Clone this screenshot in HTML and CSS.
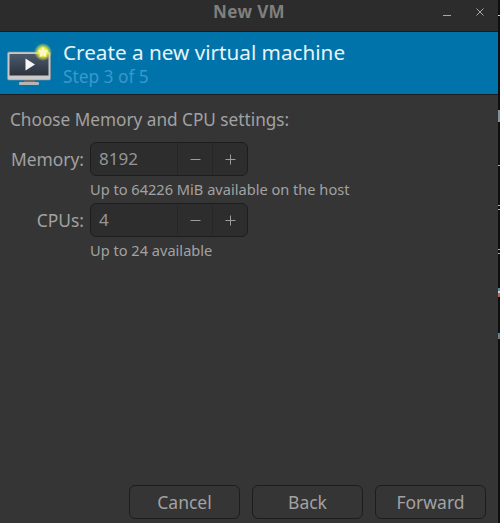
FILE: index.html
```html
<!DOCTYPE html>
<html lang="en">

<head>
    <meta charset="UTF-8">
    <meta name="viewport" content="width=device-width, initial-scale=1.0">
    <title>New VM</title>
    <link rel="stylesheet" href="styles.css">
</head>

<body>
    <div class="window">
        <!-- Title bar -->
        <div class="titlebar">
            <span class="title">New VM</span>
            <div class="window-controls">
                <svg width="10" height="10" viewBox="0 0 10 10">
                    <path d="M1 8.500h8" stroke="#a8a8a8" stroke-width="1" fill="none" />
                </svg>
                <svg width="10" height="10" viewBox="0 0 10 10">
                    <path d="M1.500 1.500l7 7M8.500 1.500l-7 7" stroke="#a8a8a8" stroke-width="1" fill="none" />
                </svg>
            </div>
        </div>

        <!-- Banner -->
        <div class="banner">
            <svg class="banner-icon" width="46" height="42" viewBox="0 0 46 42">
                <defs>
                    <radialGradient id="glow">
                        <stop offset="0.45" stop-color="#f4f43a" />
                        <stop offset="1" stop-color="#f4f43a" stop-opacity="0" />
                    </radialGradient>
                    <linearGradient id="screen" x1="0" y1="0" x2="0" y2="1">
                        <stop offset="0" stop-color="#4d5a6b" />
                        <stop offset="1" stop-color="#2b323d" />
                    </linearGradient>
                </defs>
                <rect x="0.500" y="9" width="43" height="28" rx="1.500" fill="#c9c9c9" stroke="#8d9298" stroke-width="0.6" />
                <rect x="2.500" y="11" width="39" height="21.500" fill="url(#screen)" />
                <rect x="17" y="37" width="11" height="2" fill="#6f6f6f" />
                <rect x="12" y="39" width="20" height="3" rx="1" fill="#b5b5b5" />
                <path d="M18.500 15.500l9.500 6-9.500 6z" fill="#f6f6f6" />
                <circle cx="36" cy="9" r="9" fill="url(#glow)" />
                <path d="M36 3.500l1.700 3.600 3.900.5-2.900 2.700.8 3.900-3.500-2-3.500 2 .8-3.900-2.900-2.700 3.900-.5z" fill="#fbf6c8" />
            </svg>
            <div class="banner-text">
                <div class="banner-title">Create a new virtual machine</div>
                <div class="banner-step">Step 3 of 5</div>
            </div>
        </div>

        <!-- Form -->
        <div class="content">
            <div class="heading">Choose Memory and CPU settings:</div>
            <div class="form-grid">
                <label class="field-label">Memory:</label>
                <div class="spin">
                    <span class="spin-value">8192</span>
                    <span class="spin-btn">
                        <svg width="11" height="11" viewBox="0 0 11 11"><path d="M0.500 5.500h10" stroke="#9c9c9c" fill="none" /></svg>
                    </span>
                    <span class="spin-btn">
                        <svg width="11" height="11" viewBox="0 0 11 11"><path d="M0.500 5.500h10M5.500 0.500v10" stroke="#9c9c9c" fill="none" /></svg>
                    </span>
                </div>
                <div class="hint">Up to 64226 MiB available on the host</div>

                <label class="field-label">CPUs:</label>
                <div class="spin">
                    <span class="spin-value">4</span>
                    <span class="spin-btn">
                        <svg width="11" height="11" viewBox="0 0 11 11"><path d="M0.500 5.500h10" stroke="#9c9c9c" fill="none" /></svg>
                    </span>
                    <span class="spin-btn">
                        <svg width="11" height="11" viewBox="0 0 11 11"><path d="M0.500 5.500h10M5.500 0.500v10" stroke="#9c9c9c" fill="none" /></svg>
                    </span>
                </div>
                <div class="hint">Up to 24 available</div>
            </div>
        </div>

        <!-- Footer buttons -->
        <div class="footer">
            <button class="btn">Cancel</button>
            <button class="btn">Back</button>
            <button class="btn">Forward</button>
        </div>
    </div>
</body>

</html>
```

FILE: styles.css
```css
html,
body {
    height: 100%;
}

/* The desktop peeks out past the right edge of the window */
body {
    margin: 0;
    background-color: #0f0f0f;
    background-image: linear-gradient(to bottom,
            transparent 15px, #d8d8d8 15px, #d8d8d8 16px, transparent 16px,
            transparent 110px, #7f929c 110px, #7f929c 122px, transparent 122px,
            transparent 165px, #b0b0b0 165px, #b0b0b0 166px, transparent 166px,
            transparent 205px, #b0b0b0 205px, #b0b0b0 206px, transparent 206px,
            transparent 209px, #b0b0b0 209px, #b0b0b0 210px, transparent 210px,
            transparent 249px, #b0b0b0 249px, #b0b0b0 250px, transparent 250px,
            transparent 253px, #b0b0b0 253px, #b0b0b0 254px, transparent 254px,
            transparent 288px, #55859c 288px, #55859c 291px, #d0d0d0 291px, #d0d0d0 293px,
            #b0664c 293px, #b0664c 297px, transparent 297px,
            transparent 333px, #55859c 333px, #55859c 337px, #b0664c 337px, #b0664c 339px, transparent 339px);
    color: #a2a2a2;
    font-family: 'Noto Sans', sans-serif;
    overflow: hidden;
}

.window {
    width: 498px;
    height: 100%;
    display: flex;
    flex-direction: column;
    background-color: #353535;
}

/* Title bar */
.titlebar {
    height: 31px;
    flex: none;
    display: flex;
    align-items: center;
    justify-content: center;
    position: relative;
    background-color: #2c2c2c;
    border-bottom: 1px solid #1b1b1b;
}

.title {
    font-size: 17px;
    font-weight: 700;
    color: #7f7f7f;
    letter-spacing: 0.4px;
    margin-top: -9px;
}

.window-controls {
    position: absolute;
    top: 7px;
    right: 13px;
    display: flex;
    gap: 23px;
}

/* Banner */
.banner {
    height: 62px;
    flex: none;
    display: flex;
    align-items: center;
    gap: 10px;
    padding-left: 7px;
    background-color: #0074aa;
    border-bottom: 1px solid #1b1b1b;
}

.banner-icon {
    flex: none;
    margin-top: 1px;
}

.banner-title {
    font-size: 20.700px;
    line-height: 27px;
    color: #e9f3f8;
}

.banner-step {
    font-size: 17.300px;
    line-height: 22px;
    color: #3d98c9;
}

/* Form */
.content {
    flex: 1;
    padding: 14px 10px 0;
}

.heading {
    font-size: 17.200px;
    line-height: 22px;
}

.form-grid {
    display: grid;
    grid-template-columns: 74px auto;
    justify-content: start;
    column-gap: 6px;
    margin-top: 11px;
}

.field-label {
    font-size: 17.400px;
    line-height: 35px;
    height: 34px;
    text-align: right;
}

.spin {
    width: 156px;
    height: 32px;
    display: flex;
    background-color: #2d2d2d;
    border: 1px solid #1d1d1d;
    border-radius: 6px;
}

.spin-value {
    flex: 1;
    padding-left: 8px;
    font-size: 17px;
    line-height: 32px;
    color: #969696;
}

.spin-btn {
    width: 34px;
    display: flex;
    align-items: center;
    justify-content: center;
    border-left: 1px solid #262626;
}

.hint {
    grid-column: 2;
    font-size: 14.600px;
    line-height: 18px;
    height: 27px;
    padding-top: 4px;
    box-sizing: border-box;
    white-space: nowrap;
}

/* Footer */
.footer {
    flex: none;
    display: flex;
    justify-content: flex-end;
    gap: 12px;
    padding: 0 12px 4px 0;
}

.btn {
    width: 111px;
    height: 34px;
    padding: 0;
    background-color: #353535;
    border: 1px solid #1d1d1d;
    border-radius: 6px;
    color: #a2a2a2;
    font-family: inherit;
    font-size: 17.500px;
}
```
